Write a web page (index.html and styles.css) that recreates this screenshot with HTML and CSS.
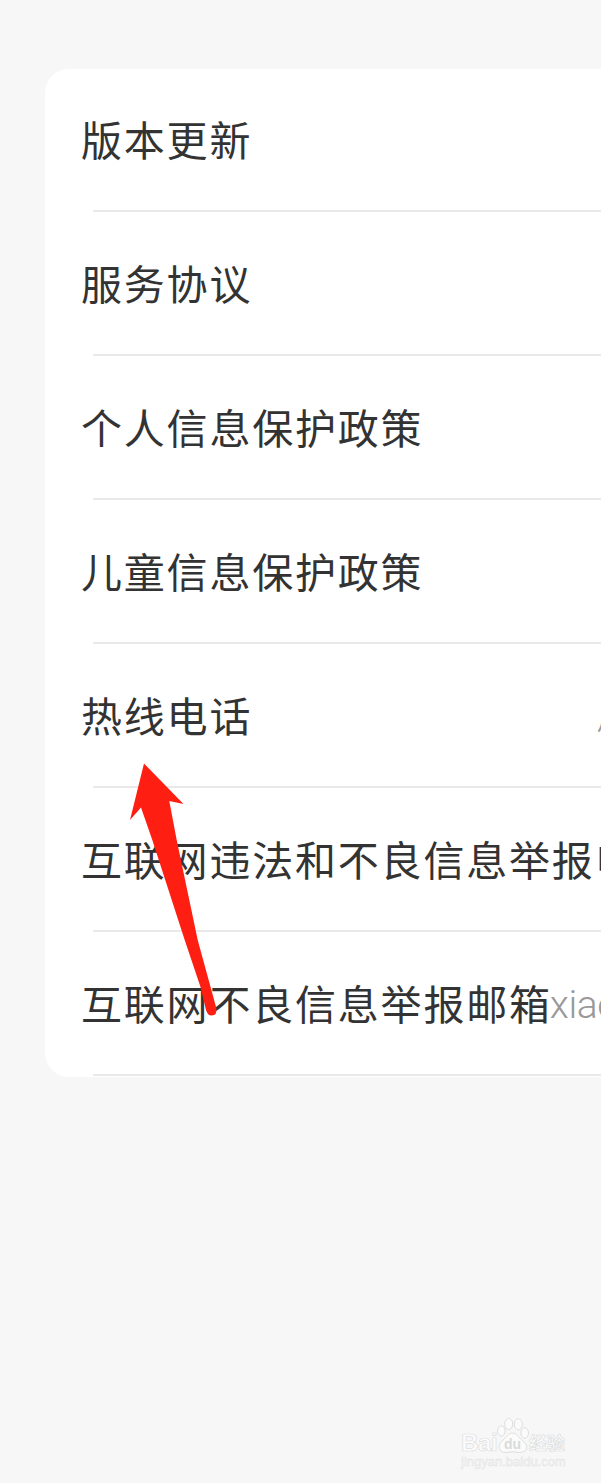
FILE: index.html
```
<!DOCTYPE html>
<html lang="zh-CN">
<head>
<meta charset="utf-8">
<title>关于</title>
<link rel="stylesheet" href="styles.css">
</head>
<body>
<main class="page">
  <ul class="card">
    <li class="row"><span class="label">版本更新</span></li>
    <li class="row"><span class="label">服务协议</span></li>
    <li class="row"><span class="label">个人信息保护政策</span></li>
    <li class="row"><span class="label">儿童信息保护政策</span></li>
    <li class="row"><span class="label">热线电话</span><span class="value value-far">周</span></li>
    <li class="row"><span class="label">互联网违法和不良信息举报电</span></li>
    <li class="row"><span class="label">互联网不良信息举报邮箱</span><span class="value">xiao</span></li>
  </ul>
  <svg class="arrow" width="60" height="256" viewBox="0 0 60 256" aria-hidden="true">
    <path d="M15 .5L54.500 41 40.300 38L47.700 77L68.700 177L87.300 245Q88.500 252.500 82.500 252.500Q78.500 252.500 77 247L71.500 224L55.700 177L23.300 77L12 44.500L1 57Z" fill="#ff1f12"/>
  </svg>
  <div class="watermark">
    <div class="brand">
      <span class="outlined bai">Bai</span>
      <svg class="paw" width="32" height="36" viewBox="0 0 32 36">
        <g fill="#fbfbfb" stroke="#dedede" stroke-width="1">
          <ellipse cx="4.300" cy="13" rx="3.800" ry="5.200"/>
          <ellipse cx="11.700" cy="6" rx="4" ry="5.600"/>
          <ellipse cx="21.300" cy="6.300" rx="4" ry="5.600"/>
          <ellipse cx="27.700" cy="15" rx="3.800" ry="5.200"/>
          <path d="M15 15C11 15 10 19 6 22C0 26 1 34 8 34.500Q16 33 23 34.500C31 34 32 27 26 23C21 19 20 15 15 15Z"/>
        </g>
        <text class="du" x="7" y="31">du</text>
      </svg>
      <span class="outlined jingyan">经验</span>
    </div>
    <div class="outlined url">jingyan.baidu.com</div>
  </div>
</main>
</body>
</html>
```
FILE: styles.css
```
body {
  margin: 0;
  background: #f7f7f7;
  font-family: "Noto Sans CJK SC", sans-serif;
}
.page {
  position: relative;
  box-sizing: border-box;
  height: 1483px;
  padding: 69px 0 0 45px;
  overflow: hidden;
}
.card {
  height: 1008px;
  margin: 0;
  padding: 0;
  list-style: none;
  background: #fff;
  border-radius: 24px 0 0 24px;
  overflow: hidden;
}
.row {
  display: flex;
  align-items: center;
  box-sizing: border-box;
  height: 144px;
  padding: 0 0 0 36px;
  background: linear-gradient(#e9e9e9, #e9e9e9) 48px 141px / 100% 2px no-repeat;
  white-space: nowrap;
}
.label {
  flex: none;
  padding-bottom: 6px;
  color: #333;
  font-size: 41px;
  line-height: 60px;
  letter-spacing: 1.8px;
}
.value {
  flex: none;
  margin-left: -2px;
  color: #999;
  font-family: Roboto, "Noto Sans CJK SC", sans-serif;
  font-size: 39px;
  font-weight: 300;
  line-height: 60px;
  letter-spacing: -0.4px;
}
.value-far {
  margin-left: 344px;
  padding-bottom: 4px;
}
.arrow {
  position: absolute;
  left: 129px;
  top: 763px;
  overflow: visible;
}
.watermark {
  position: absolute;
  left: 461px;
  top: 1418px;
  width: 110px;
}
.brand {
  display: flex;
  align-items: flex-end;
  height: 36px;
}
.outlined {
  color: #fcfcfc;
  -webkit-text-stroke: 0.7px #dedede;
}
.bai {
  width: 36px;
  font: bold 24px/22px "Liberation Sans", sans-serif;
  letter-spacing: -0.3px;
}
.paw {
  flex: none;
}
.du {
  fill: #dadada;
  font: bold 14px "Liberation Sans", sans-serif;
}
.jingyan {
  font-size: 18px;
  font-weight: bold;
  line-height: 24px;
}
.url {
  color: #f2f2f2;
  font: 13px/15px "Liberation Sans", sans-serif;
  -webkit-text-stroke: 0.4px #e2e2e2;
}
```
